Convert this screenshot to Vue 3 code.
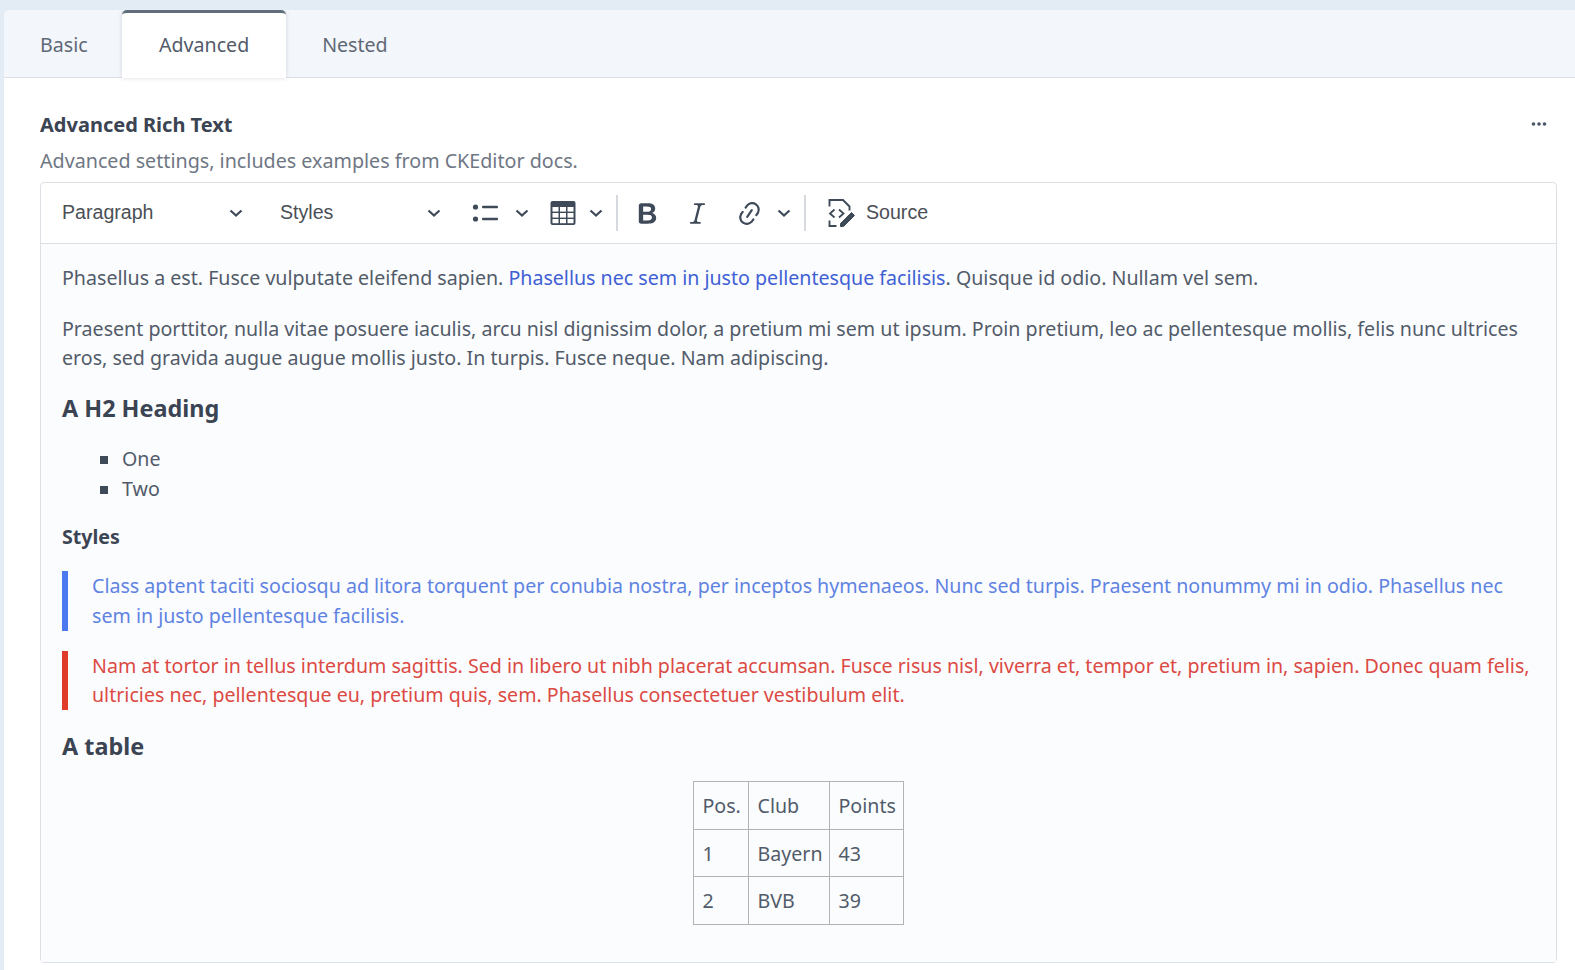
<template>
  <div class="page">
    <div class="card">
      <div class="tabs">
        <button
          v-for="tab in tabs"
          :key="tab"
          class="tab"
          :class="{ active: tab === activeTab }"
          @click="activeTab = tab"
        >{{ tab }}</button>
      </div>

      <div class="panel">
        <div class="field-head">
          <label class="field-label">Advanced Rich Text</label>
          <svg class="more" width="16" height="4" viewBox="0 0 16 4">
            <circle cx="2.5" cy="2" r="1.8" />
            <circle cx="8" cy="2" r="1.8" />
            <circle cx="13.5" cy="2" r="1.8" />
          </svg>
        </div>
        <div class="field-help">Advanced settings, includes examples from CKEditor docs.</div>

        <div class="editor">
          <div class="toolbar">
            <div class="dropdown para">
              <span>Paragraph</span>
              <svg class="chev" viewBox="0 0 14 8"><path d="M1.5 1.5 7 6.5l5.5-5" /></svg>
            </div>
            <div class="dropdown styles">
              <span>Styles</span>
              <svg class="chev" viewBox="0 0 14 8"><path d="M1.5 1.5 7 6.5l5.5-5" /></svg>
            </div>

            <div class="tool list-tool">
              <svg class="icon-list" width="28" height="20" viewBox="0 0 28 20">
                <circle cx="3.5" cy="4" r="2.6" />
                <circle cx="3.5" cy="16" r="2.6" />
                <rect x="10" y="2.8" width="16" height="2.4" rx="1" />
                <rect x="10" y="14.8" width="16" height="2.4" rx="1" />
              </svg>
              <svg class="chev" viewBox="0 0 14 8"><path d="M1.5 1.5 7 6.5l5.5-5" /></svg>
            </div>

            <div class="tool table-tool">
              <svg width="26" height="26" viewBox="0 0 26 26">
                <rect x="0.5" y="1" width="25" height="24" rx="2" fill="#3f4a59" />
                <rect x="2.5" y="7" width="6" height="4.6" fill="#fff" />
                <rect x="10" y="7" width="6" height="4.6" fill="#fff" />
                <rect x="17.5" y="7" width="6" height="4.6" fill="#fff" />
                <rect x="2.5" y="13" width="6" height="4.6" fill="#fff" />
                <rect x="10" y="13" width="6" height="4.6" fill="#fff" />
                <rect x="17.5" y="13" width="6" height="4.6" fill="#fff" />
                <rect x="2.5" y="19" width="6" height="4.2" fill="#fff" />
                <rect x="10" y="19" width="6" height="4.2" fill="#fff" />
                <rect x="17.5" y="19" width="6" height="4.2" fill="#fff" />
              </svg>
              <svg class="chev" viewBox="0 0 14 8"><path d="M1.5 1.5 7 6.5l5.5-5" /></svg>
            </div>

            <span class="sep"></span>

            <div class="tool icon-btn">
              <svg width="29" height="29" viewBox="0 0 20 20" fill="#3f4a59">
                <path d="M10.187 17H5.773c-.637 0-1.092-.138-1.364-.415-.273-.277-.409-.718-.409-1.323V4.738c0-.617.14-1.062.419-1.332.279-.27.73-.406 1.354-.406h4.68c.69 0 1.288.041 1.793.124.506.083.96.242 1.36.478.341.197.644.447.906.75a3.262 3.262 0 0 1 .808 2.162c0 1.401-.722 2.426-2.167 3.075C15.05 10.175 16 11.315 16 13.01a3.756 3.756 0 0 1-2.296 3.504 6.1 6.1 0 0 1-1.517.377c-.571.073-1.238.11-2 .11zm-.217-6.217H7v4.087h3.069c1.977 0 2.965-.69 2.965-2.072 0-.707-.256-1.22-.768-1.537-.512-.319-1.277-.478-2.296-.478zM7 5.13v3.619h2.606c.729 0 1.292-.067 1.69-.2a1.6 1.6 0 0 0 .91-.765c.165-.267.247-.566.247-.897 0-.707-.26-1.176-.778-1.409-.519-.232-1.31-.348-2.375-.348H7z" />
              </svg>
            </div>
            <div class="tool icon-btn">
              <svg width="29" height="29" viewBox="0 0 20 20" fill="#3f4a59">
                <path d="m9.586 14.633.021.004c-.036.335.095.655.393.962.082.083.173.15.274.201h1.474a.6.6 0 1 1 0 1.2H5.304a.6.6 0 0 1 0-1.2h1.15c.474-.07.809-.182 1.005-.334.157-.122.291-.32.404-.597l2.416-9.55a1.053 1.053 0 0 0-.281-.823 1.12 1.12 0 0 0-.442-.296H8.15a.6.6 0 0 1 0-1.2h6.443a.6.6 0 1 1 0 1.2h-1.195c-.376.056-.65.155-.823.296-.215.175-.423.439-.623.79l-2.366 9.347z" />
              </svg>
            </div>
            <div class="tool link-tool">
              <svg width="29" height="29" viewBox="0 0 20 20" fill="#3f4a59">
                <path d="m11.077 15 .991-1.416a.75.75 0 1 1 1.229.86l-1.148 1.64a.748.748 0 0 1-.217.206 5.251 5.251 0 0 1-8.503-5.955.741.741 0 0 1 .12-.274l1.147-1.639a.75.75 0 1 1 1.228.86L4.933 10.7l.006.003a3.75 3.75 0 0 0 6.132 4.294l.006.004zm5.494-5.335a.748.748 0 0 1-.12.274l-1.147 1.639a.75.75 0 1 1-1.228-.86l.86-1.23a3.75 3.75 0 0 0-6.144-4.301l-.86 1.229a.75.75 0 0 1-1.229-.86l1.148-1.64a.748.748 0 0 1 .217-.206 5.251 5.251 0 0 1 8.503 5.955zm-4.563-2.532a.75.75 0 0 1 .184 1.045l-3.155 4.505a.75.75 0 1 1-1.229-.86l3.155-4.506a.75.75 0 0 1 1.045-.184z" />
              </svg>
              <svg class="chev" viewBox="0 0 14 8"><path d="M1.5 1.5 7 6.5l5.5-5" /></svg>
            </div>

            <span class="sep"></span>

            <div class="tool source-tool">
              <svg width="30" height="30" viewBox="0 0 30 30" fill="none" stroke="#3f4a59" stroke-width="1.9">
                <path d="M2.500 8.500V2h13.500l6.500 6.500v4" />
                <path d="M2.500 22.500V28h7" />
                <path d="M7.500 11.500 3 15.500l4.500 4M12 11.500l4.500 4-4.500 4" stroke-width="1.800" />
                <path d="M13.500 28.500v-3l11-11 3 3-11 11z" fill="#3f4a59" stroke-width="1" />
              </svg>
              <span>Source</span>
            </div>
          </div>

          <div class="content">
            <p>Phasellus a est. Fusce vulputate eleifend sapien. <a href="#">Phasellus nec sem in justo pellentesque facilisis</a>. Quisque id odio. Nullam vel sem.</p>
            <p>Praesent porttitor, nulla vitae posuere iaculis, arcu nisl dignissim dolor, a pretium mi sem ut ipsum. Proin pretium, leo ac pellentesque mollis, felis nunc ultrices eros, sed gravida augue augue mollis justo. In turpis. Fusce neque. Nam adipiscing.</p>
            <h2 class="first-heading">A H2 Heading</h2>
            <ul>
              <li>One</li>
              <li>Two</li>
            </ul>
            <h3>Styles</h3>
            <p class="note info">Class aptent taciti sociosqu ad litora torquent per conubia nostra, per inceptos hymenaeos. Nunc sed turpis. Praesent nonummy mi in odio. Phasellus nec sem in justo pellentesque facilisis.</p>
            <p class="note danger">Nam at tortor in tellus interdum sagittis. Sed in libero ut nibh placerat accumsan. Fusce risus nisl, viverra et, tempor et, pretium in, sapien. Donec quam felis, ultricies nec, pellentesque eu, pretium quis, sem. Phasellus consectetuer vestibulum elit.</p>
            <h2 class="table-heading">A table</h2>
            <table>
              <tbody>
                <tr v-for="row in rows" :key="row[0]">
                  <td v-for="cell in row" :key="cell">{{ cell }}</td>
                </tr>
              </tbody>
            </table>
          </div>
        </div>
      </div>
    </div>
  </div>
</template>

<script setup>
import { ref } from 'vue'

const tabs = ['Basic', 'Advanced', 'Nested']
const activeTab = ref('Advanced')

const rows = [
  ['Pos.', 'Club', 'Points'],
  ['1', 'Bayern', '43'],
  ['2', 'BVB', '39']
]
</script>

<style>
html, body {
  margin: 0;
  background: #e3ecf5;
  overflow: hidden;
}
</style>

<style scoped>
.page {
  height: 970px;
  padding: 10px 0 0 4px;
  box-sizing: border-box;
  overflow: hidden;
  font-family: "Noto Sans", "Open Sans", sans-serif;
  font-size: 19.62px;
  color: #525b69;
}
.card {
  background: #fff;
  border-top-left-radius: 6px;
  height: 960px;
  overflow: hidden;
}
.tabs {
  display: flex;
  height: 68px;
  box-sizing: border-box;
  background: #f3f6fb;
  border-bottom: 1px solid #dcdfe4;
}
.tab {
  border: 0;
  background: transparent;
  font: inherit;
  color: #5f6876;
  padding: 2px 34.5px 0 36px;
  height: 67px;
  cursor: pointer;
}
.tab.active {
  width: 164px;
  height: 68px;
  padding: 0 0 2px;
  color: #525b69;
  background: #fff;
  border-top: 3px solid #606d7b;
  border-radius: 5px 5px 0 0;
  box-shadow: 0 0 5px rgba(0, 0, 0, 0.14);
}
.panel {
  padding: 31px 18px 0 36px;
}
.field-head {
  display: flex;
  justify-content: space-between;
  align-items: center;
  height: 30px;
  padding-right: 10px;
}
.field-label {
  font-size: 20px;
  font-weight: 700;
  color: #3b4452;
}
.more {
  fill: #4a5565;
}
.field-help {
  margin-top: 7px;
  height: 30px;
  line-height: 30px;
  font-size: 19.7px;
  color: #6f7784;
}
.editor {
  margin-top: 6px;
  border: 1px solid #dcdfe4;
  border-radius: 4px;
}
.toolbar {
  display: flex;
  align-items: center;
  height: 60px;
  border-bottom: 1px solid #dcdfe4;
  font-family: "Liberation Sans", Arial, sans-serif;
  font-size: 19.6px;
  color: #4b4f56;
  padding-left: 21px;
}
.toolbar span:not(.sep) {
  margin-bottom: 2px;
}
.dropdown {
  display: flex;
  align-items: center;
  justify-content: space-between;
}
.para {
  width: 181px;
  margin-right: 37px;
}
.styles {
  width: 161px;
  margin-right: 31px;
}
.chev {
  width: 14px;
  height: 8px;
  fill: none;
  stroke: #3f4a59;
  stroke-width: 2.2;
  flex: none;
}
.tool {
  display: flex;
  align-items: center;
}
.list-tool .icon-list {
  fill: #3f4a59;
  margin-right: 15px;
}
.list-tool {
  margin-right: 21px;
}
.table-tool svg:first-child {
  margin-right: 13px;
}
.table-tool {
  margin-right: 13px;
}
.sep {
  width: 2px;
  height: 36px;
  background: #d6d9de;
}
.icon-btn {
  margin-left: 15px;
  margin-right: 6px;
}
.link-tool {
  margin-left: 17px;
  margin-right: 13px;
}
.link-tool .chev {
  margin-left: 13px;
}
.source-tool {
  margin-left: 21px;
  gap: 9px;
}
.content {
  height: 718px;
  box-sizing: border-box;
  background: #fbfcfe;
  padding: 19px 22px 0 21px;
  line-height: 29.6px;
}
.content p {
  margin: 0 0 21px;
}
.content a {
  color: #4060d4;
  text-decoration: none;
}
.content h2 {
  margin: 0;
  font-size: 23.4px;
  line-height: 30px;
  font-weight: 700;
  color: #3b4452;
}
.content .first-heading {
  margin-top: -0.5px;
}
.content .table-heading {
  margin-top: 1px;
}
.content ul {
  margin: 21px 0 0;
  padding: 0 0 0 60px;
  list-style: none;
}
.content li::before {
  content: "";
  display: inline-block;
  width: 8px;
  height: 8px;
  margin: 0 14px 2px -22px;
  background: #3f4a59;
  vertical-align: middle;
}
.content h3 {
  margin: 19px 0 0;
  font-size: 19.62px;
  line-height: 30px;
  font-weight: 700;
  color: #3b4452;
}
.note {
  border-left: 6px solid;
  padding-left: 24px;
}
.content .note.info {
  margin-top: 19px;
  margin-bottom: 20px;
  color: #5f83e2;
  border-left-color: #4c78f0;
}
.note.danger {
  color: #dc4a44;
  border-left-color: #e03c2c;
}
table {
  border-collapse: collapse;
  table-layout: fixed;
  width: 210px;
  margin: 20px auto 0;
}
td {
  box-sizing: border-box;
  border: 1px solid #b0b3b8;
  height: 47.67px;
  padding: 1px 0 0 9px;
  white-space: nowrap;
}
td:nth-child(1) { width: 55px; }
td:nth-child(2) { width: 81px; }
td:nth-child(3) { width: 74px; }
</style>
